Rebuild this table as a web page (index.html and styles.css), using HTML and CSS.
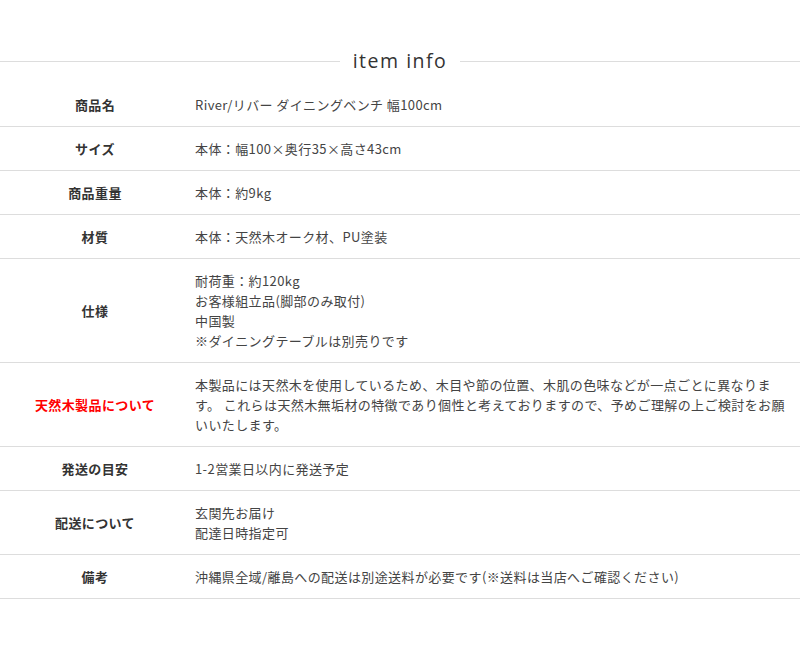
FILE: index.html
```html
<!DOCTYPE html>
<html lang="ja">
<head>
    <meta charset="UTF-8">
    <meta name="viewport" content="width=device-width, initial-scale=1.0">
    <title>item info</title>
    <link rel="stylesheet" href="styles.css">
</head>
<body>
    <h2 class="info-title"><span>item info</span></h2>
    <table class="info-table">
        <tr>
            <th>商品名</th>
            <td>River/リバー ダイニングベンチ 幅100cm</td>
        </tr>
        <tr>
            <th>サイズ</th>
            <td>本体：幅100×奥行35×高さ43cm</td>
        </tr>
        <tr>
            <th>商品重量</th>
            <td>本体：約9kg</td>
        </tr>
        <tr>
            <th>材質</th>
            <td>本体：天然木オーク材、PU塗装</td>
        </tr>
        <tr>
            <th>仕様</th>
            <td>耐荷重：約120kg<br>お客様組立品(脚部のみ取付)<br>中国製<br>※ダイニングテーブルは別売りです</td>
        </tr>
        <tr>
            <th class="notice">天然木製品について</th>
            <td>本製品には天然木を使用しているため、木目や節の位置、木肌の色味などが一点ごとに異なります。 これらは天然木無垢材の特徴であり個性と考えておりますので、予めご理解の上ご検討をお願いいたします。</td>
        </tr>
        <tr>
            <th>発送の目安</th>
            <td>1-2営業日以内に発送予定</td>
        </tr>
        <tr>
            <th>配送について</th>
            <td>玄関先お届け<br>配達日時指定可</td>
        </tr>
        <tr>
            <th>備考</th>
            <td>沖縄県全域/離島への配送は別途送料が必要です(※送料は当店へご確認ください)</td>
        </tr>
    </table>
</body>
</html>
```

FILE: styles.css
```css
body {
    margin: 0;
    padding: 0;
    background-color: #fff;
    font-family: "Noto Sans CJK JP", "Noto Sans", sans-serif;
    color: #444;
}
.info-title {
    display: flex;
    align-items: center;
    gap: 13px;
    margin: 48px 0 9px;
    font-family: "Open Sans", "Noto Sans", sans-serif;
    font-size: 19.5px;
    font-weight: normal;
    line-height: 26px;
    letter-spacing: 1.5px;
    color: #333;
}
.info-title::before,
.info-title::after {
    content: "";
    flex: 1;
    height: 1px;
    background-color: #ddd; /* thin rule both sides */
}
.info-table {
    width: 100%;
    border-collapse: collapse;
    font-size: 13px;
    line-height: 20px;
    letter-spacing: 0.4px;
}
.info-table tr {
    border-bottom: 1px solid #ddd;
}
.info-table th {
    width: 190px;
    padding: 12px 0 11px;
    text-align: center;
    font-weight: bold;
    color: #333;
}
.info-table td {
    padding: 12px 12px 11px 5px;
    text-align: left;
}
.info-table th.notice {
    color: #f00;
}
```
